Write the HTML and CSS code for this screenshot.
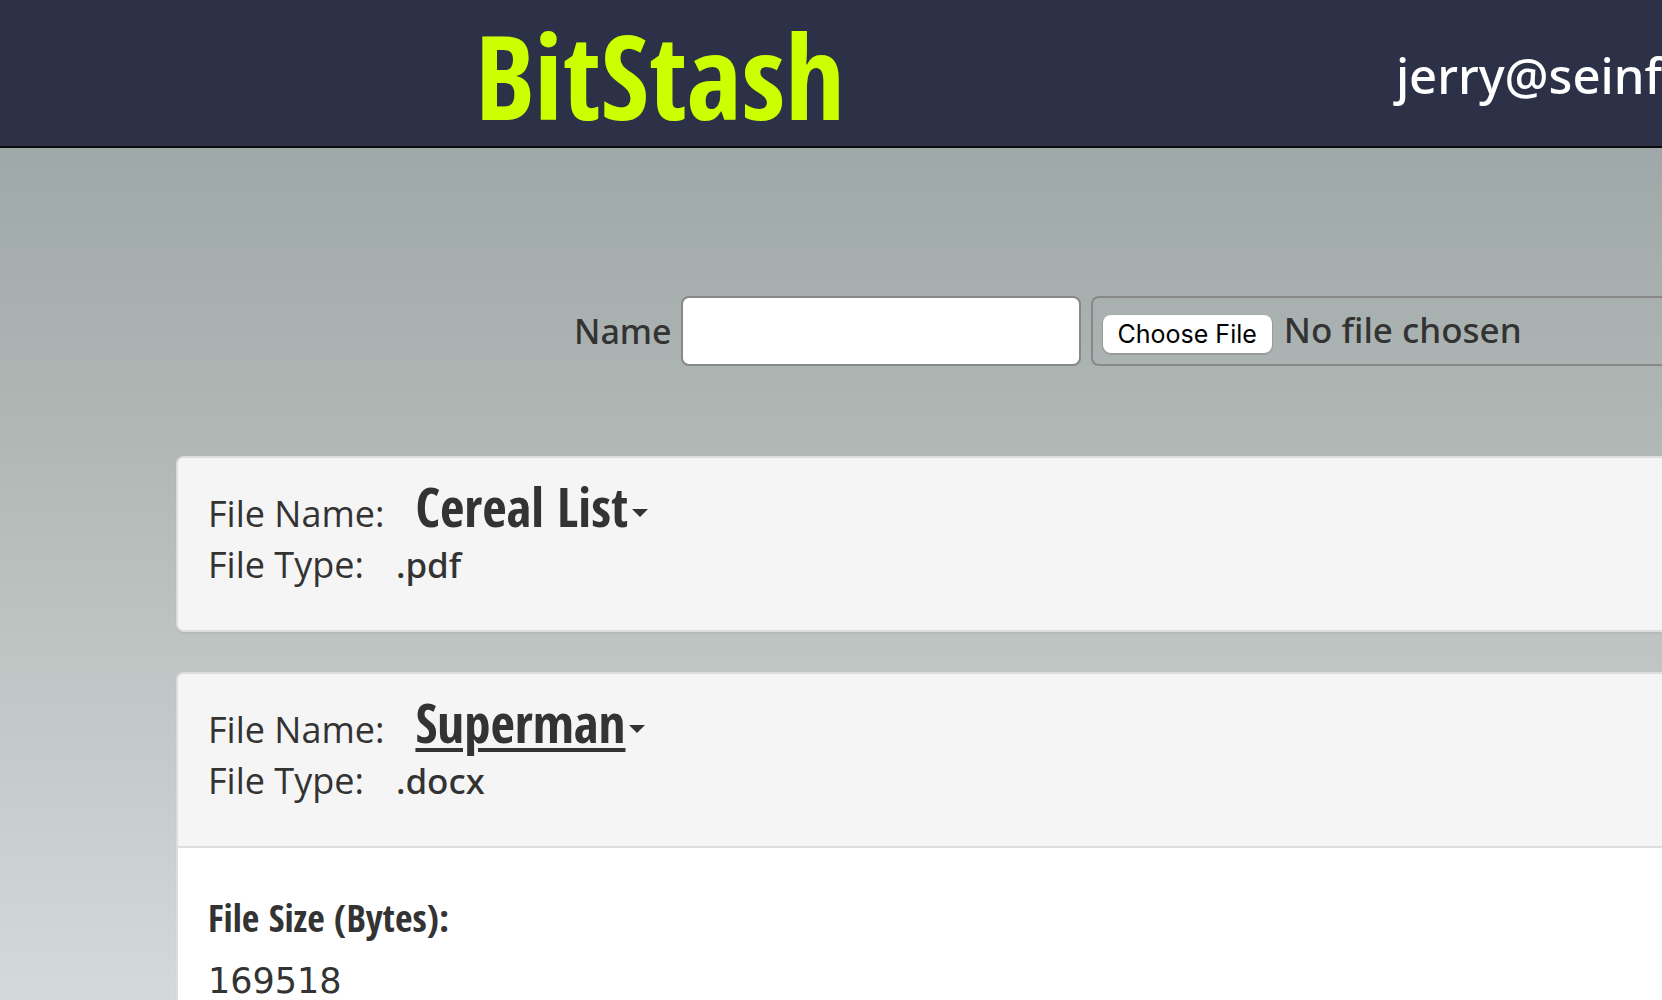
FILE: index.html
```html
<!DOCTYPE html>
<html lang="en">
<head>
<meta charset="utf-8">
<title>BitStash</title>
<link rel="stylesheet" href="styles.css">
</head>
<body>
<header class="topbar">
  <h1 class="brand">BitStash</h1>
  <span class="account">jerry@seinf</span>
</header>
<main class="page">
  <form class="upload">
    <label class="upload-label" for="name">Name</label>
    <input class="upload-name" id="name" type="text">
    <input class="upload-file" type="file" aria-label="File">
  </form>
  <section class="card">
    <div class="card-head">
      <p class="row"><span>File Name:</span><a class="file-link" href="#">Cereal List</a><span class="caret"></span></p>
      <p class="row"><span>File Type:</span><span class="file-type">.pdf</span></p>
    </div>
  </section>
  <section class="card">
    <div class="card-head">
      <p class="row"><span>File Name:</span><a class="file-link file-link-active" href="#">Superman</a><span class="caret"></span></p>
      <p class="row"><span>File Type:</span><span class="file-type">.docx</span></p>
    </div>
    <div class="card-body">
      <h2 class="detail-title">File Size (Bytes):</h2>
      <p class="detail-value">169518</p>
    </div>
  </section>
</main>
</body>
</html>
```
FILE: styles.css
```css
* {
  box-sizing: border-box;
}

html {
  height: 100%;
  overflow: hidden;
}

body {
  min-height: 100%;
  margin: 0;
  background: linear-gradient(#9da6a7 0, #9fa8a8 148px, #b0b8b6 440px, #d4d9d9 1000px);
  color: #333;
  font: 36px/50px "Open Sans", "Noto Sans", sans-serif;
}

h1,
h2,
p {
  margin: 0;
}

.topbar {
  display: flex;
  align-items: center;
  justify-content: space-between;
  height: 148px;
  padding: 4px 0 0 475px;
  border-bottom: 2px solid #090909;
  background: #2d3147;
  white-space: nowrap;
}

.brand {
  color: #cf0;
  font: 800 117px/142px "Open Sans Condensed", "Roboto Condensed", sans-serif;
}

.account {
  color: #fff;
  font: 500 49px/60px "Noto Sans", sans-serif;
}

.page {
  padding: 148px 0 0 176px;
}

.upload {
  display: flex;
  align-items: center;
  margin-left: 398px;
  font: 500 35px/50px "Noto Sans", sans-serif;
}

.upload-label {
  margin-right: 9px;
  font-size: 34px;
}

.upload-name,
.upload-file {
  height: 70px;
  border: 2px solid #888;
  border-radius: 8px;
  font: inherit;
  color: inherit;
}

.upload-name {
  width: 400px;
  margin-right: 10px;
  padding: 0 16px;
  background: #fff;
}

.upload-file {
  flex: 1;
  min-width: 0;
  padding: 0 10px;
  border-right: 0;
  border-radius: 8px 0 0 8px;
}

.upload-file::file-selector-button {
  height: 38px;
  margin: 17px 12px 0 0;
  padding: 0 15px;
  border: 0;
  border-radius: 8px;
  background: #fff;
  box-shadow: 0 1px 1px 1px #999;
  color: #000;
  font: 25px/38px Inter, sans-serif;
}

.card {
  margin-top: 40px;
  border: 2px solid #ddd;
  border-right: 0;
  border-radius: 8px 0 0 8px;
  background: #fff;
  box-shadow: 0 2px 2px rgba(0, 0, 0, 0.05);
  overflow: hidden;
}

.upload + .card {
  margin-top: 90px;
}

.card-head {
  display: grid;
  row-gap: 8px;
  padding: 24px 30px 40px;
  background: #f5f5f5;
}

.row {
  display: flex;
  align-items: baseline;
  height: 50px;
}

.file-link {
  margin-left: 31px;
  color: inherit;
  font: 800 53px/50px "Open Sans Condensed", "Roboto Condensed", sans-serif;
  text-decoration: none;
}

.file-link-active {
  text-decoration: underline;
  text-decoration-thickness: 4px;
  text-underline-offset: 5px;
}

.caret {
  align-self: center;
  margin: 12px 0 0 4px;
  border: 8px solid transparent;
  border-top-color: #333;
  border-bottom: 0;
}

.file-type {
  margin-left: 32px;
  font: 500 35px/50px "Noto Sans", sans-serif;
}

.card-body {
  padding: 39px 30px;
  border-top: 2px solid #ddd;
}

.detail-title {
  font: 800 38px/60px "Open Sans Condensed", "Roboto Condensed", sans-serif;
}

.detail-value {
  font: 35px/68px "DejaVu Sans", sans-serif;
}
```
